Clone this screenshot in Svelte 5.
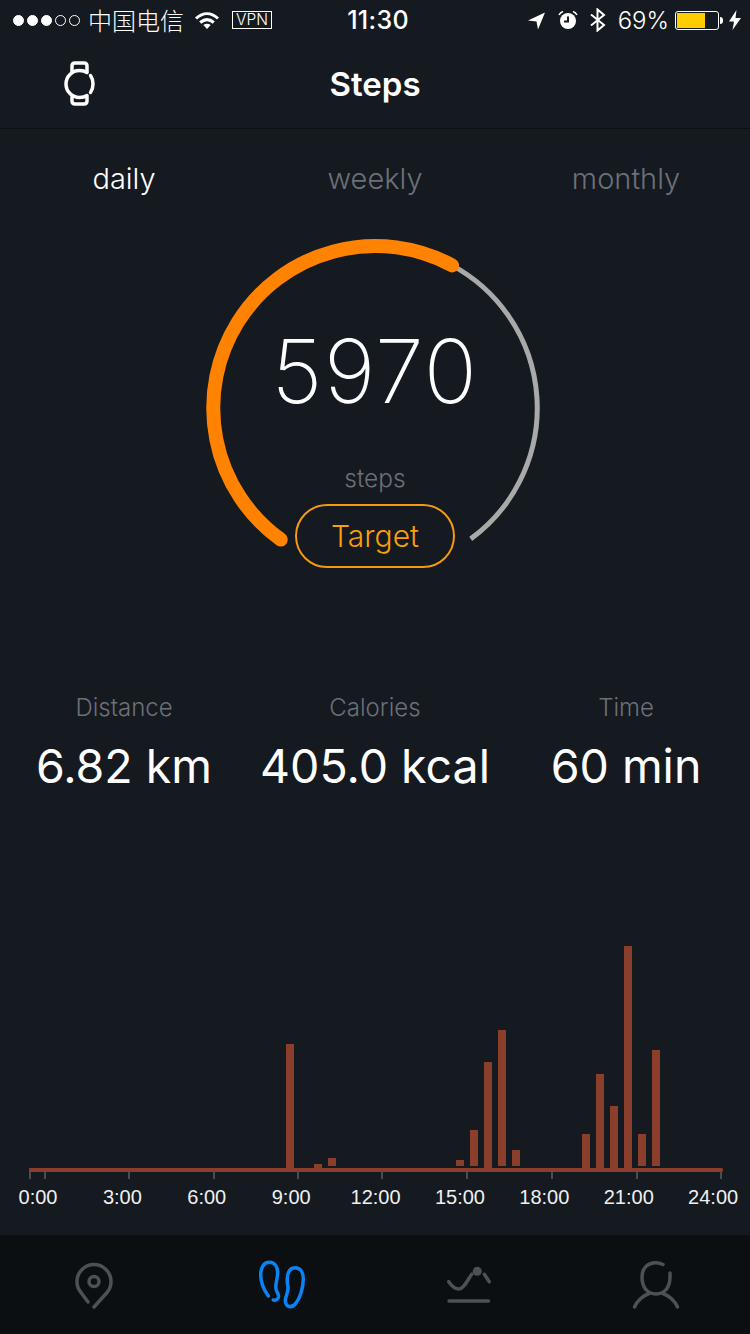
<script>
  const tabs = ["daily", "weekly", "monthly"];
  const stats = [
    { label: "Distance", value: "6.82 km" },
    { label: "Calories", value: "405.0 kcal" },
    { label: "Time", value: "60 min" },
  ];
  const hours = ["0:00", "3:00", "6:00", "9:00", "12:00", "15:00", "18:00", "21:00", "24:00"];
  const ticks = [30, 45, 129, 214, 298, 382, 467, 552, 637, 721];
  // x, top, bottom of each hourly bar, in page pixels
  const bars = [
    [286, 1044, 1170], [314, 1164, 1170], [328, 1158, 1166],
    [456, 1160, 1166], [470, 1130, 1166], [484, 1062, 1170],
    [498, 1030, 1166], [512, 1150, 1166], [582, 1134, 1170],
    [596, 1074, 1170], [610, 1106, 1170], [624, 946, 1170],
    [638, 1134, 1166], [652, 1050, 1166],
  ];

  // point on the gauge circle, degrees clockwise from the top
  const R = 162;
  const pt = (deg) => {
    const a = (deg * Math.PI) / 180;
    return `${375.25 + R * Math.sin(a)} ${408 - R * Math.cos(a)}`;
  };
  const arc = (from, to) => `M${pt(from)}A${R} ${R} 0 ${to - from > 180 ? 1 : 0} 1 ${pt(to)}`;
</script>

<div class="page">
  <div class="statusbar">
    <div class="status-left">
      <div class="signal">
        <i class="on"></i><i class="on"></i><i class="on"></i><i></i><i></i>
      </div>
      <span class="carrier">中国电信</span>
      <svg class="wifi" width="26" height="19" viewBox="0 0 26 19">
        <path d="M2 7.500C9 1 17 1 24 7.500" />
        <path d="M6.200 11.500C10.500 7.800 15.500 7.800 19.800 11.500" />
        <path class="solid" d="M9.300 14 13 18l3.700-4C14.500 12.200 11.500 12.200 9.300 14Z" />
      </svg>
      <span class="vpn">VPN</span>
    </div>
    <div class="clock">11:30</div>
    <div class="status-right">
      <svg width="19" height="19" viewBox="0 0 19 19">
        <path fill="#fff" d="M1 9.500 18 1.500 11 18.500 9.500 10.500Z" />
      </svg>
      <svg class="alarm" width="20" height="20" viewBox="0 0 20 20">
        <circle cx="10" cy="11" r="8" fill="#fff" />
        <path d="M10 6.500V11.500H6" fill="none" stroke="#151920" stroke-width="2" />
        <path d="M1 5C2 3 3.500 2 5 1.500M19 5C18 3 16.500 2 15 1.500" fill="none" stroke="#fff" stroke-width="1.500" />
      </svg>
      <svg class="bt" width="18" height="24" viewBox="0 0 18 24">
        <path d="M2 6.500 15 17 8.500 22.500V1.500L15 7 2 17.500" fill="none" stroke="#fff" stroke-width="2" />
      </svg>
      <span class="percent">69%</span>
      <div class="battery"><div class="level" style="width: 69%"></div></div>
      <div class="nub"></div>
      <svg class="bolt" width="12" height="20" viewBox="0 0 12 20">
        <path fill="#fff" d="M7.500 0 0 11.500H5L3.500 20 12 8H6.500Z" />
      </svg>
    </div>
  </div>

  <header class="navbar">
    <svg class="watch" width="40" height="54" viewBox="0 0 40 54">
      <path d="M13 15.500V10C13 8 14.200 7 16 7H25C26.800 7 28 8 28 10V15.500" />
      <path d="M13 41V45C13 47 14.200 48 16 48H25C26.800 48 28 47 28 45V41" />
      <path d="M28 16.500C25.800 15 23.300 14.500 20.500 14.500 13 14.500 7 20.500 7 28S13 41.500 20.500 41.500C23.300 41.500 25.800 41 28 39.500" />
      <path d="M31.500 19.500C33.300 22 34 25 34 28S33.300 34 31.500 36.500" />
    </svg>
    <h1>Steps</h1>
  </header>

  <nav class="tabs">
    {#each tabs as tab, i}
      <span class="tab" class:active={i === 0}>{tab}</span>
    {/each}
  </nav>

  <section class="gauge">
    <svg width="360" height="360" viewBox="195 229 360 360">
      <path d={arc(28.3, 143.9)} fill="none" stroke="#a9a9a9" stroke-width="5" />
      <path d={arc(215.7, 388.3)} fill="none" stroke="#ff8300" stroke-width="14" stroke-linecap="round" />
    </svg>
    <div class="gauge-text">
      <div class="count">5970</div>
      <div class="unit">steps</div>
      <button class="target">Target</button>
    </div>
  </section>

  <section class="stats">
    {#each stats as stat}
      <div class="stat">
        <div class="stat-label">{stat.label}</div>
        <div class="stat-value">{stat.value}</div>
      </div>
    {/each}
  </section>

  <section class="chart">
    <svg width="750" height="252" viewBox="0 930 750 252">
      {#each ticks as x}
        <rect x={x - 1} y="1168" width="2" height="11" fill="#4a4d4c" />
      {/each}
      <rect x="29" y="1168" width="694" height="4" rx="1.500" fill="#8b3e2c" />
      {#each bars as [x, top, bottom]}
        <rect {x} y={top} width="8" height={bottom - top} fill="#8b3e2c" />
      {/each}
    </svg>
    <div class="hours">
      {#each hours as hour}
        <span>{hour}</span>
      {/each}
    </div>
  </section>

  <footer class="tabbar">
    <svg class="grey" width="48" height="56" viewBox="0 0 48 56">
      <path d="M18 45 11 35.500A17 17 0 1 1 37 35.500L24 50" />
      <circle cx="24" cy="24.500" r="5" />
    </svg>
    <svg class="blue" width="54" height="54" viewBox="-1 0 54 54">
      <path d="M13.300 38C9 32 5.700 25 5.700 17 5.700 9 9 4.300 14.300 4.300 20 4.300 22.700 9 22.700 15 22.700 21 20 26 21 31 21.500 34 24 36 23.500 39 23 41.500 20 42.700 18.300 42" />
      <path d="M40 9.700C45 9.700 48.300 14 48.300 21 48.300 30 45 40 41 45 39 48 36.700 49 34 48.500 31 48 30 44 30.500 41 31 37 33.500 34 33 29 32.500 26 32 24 32.300 21 32.600 14 35 9.700 40 9.700Z" />
    </svg>
    <svg class="grey" width="48" height="44" viewBox="0 0 48 44">
      <path d="M3.700 18.700C6 22 10 26 14 26 19 26 23 16 27 11" />
      <circle class="dot" cx="32.300" cy="8.300" r="4.500" />
      <path d="M39.300 11.300 44.300 18.700" />
      <path d="M4 38H43.500" />
    </svg>
    <svg class="grey" width="48" height="52" viewBox="0 0 48 52">
      <path d="M31 5.500C28.500 4.300 26 3.800 24 3.800 15 3.800 10 10 10 18 10 28 15 35 24 35 33 35 38 28 38 18L38 14" />
      <path d="M2.500 48C5 42 11 36.500 17 34.500M31 34.500C37 36.500 43 42 45.500 48" />
    </svg>
  </footer>
</div>

<style>
  :global(body) {
    background: #151920;
  }

  .page {
    width: 750px;
    height: 1334px;
    display: flex;
    flex-direction: column;
    overflow: hidden;
    background: #151920;
    color: #fff;
    font-family: Inter, "Noto Sans CJK SC", sans-serif;
  }

  /* status bar */
  .statusbar {
    height: 40px;
    flex: none;
    display: grid;
    grid-template-columns: 1fr auto 1fr;
    align-items: center;
    padding: 0 9px 0 13px;
    font-size: 24px;
  }

  .status-left,
  .status-right {
    display: flex;
    align-items: center;
  }

  .status-right {
    justify-content: flex-end;
  }

  .signal {
    display: flex;
    gap: 3px;
  }

  .signal i {
    width: 11px;
    height: 11px;
    box-sizing: border-box;
    border: 1px solid #fff;
    border-radius: 50%;
  }

  .signal i.on {
    background: #fff;
  }

  .carrier {
    margin-left: 8px;
    font-family: "Noto Sans CJK SC", sans-serif;
    font-size: 24px;
    font-weight: 300;
    line-height: 40px;
  }

  .wifi {
    margin-left: 10px;
    fill: none;
    stroke: #fff;
    stroke-width: 3;
  }

  .wifi .solid {
    fill: #fff;
    stroke: none;
  }

  .vpn {
    margin-left: 12px;
    width: 40px;
    height: 18px;
    box-sizing: border-box;
    border: 1px solid #fff;
    font-size: 15.500px;
    font-weight: 300;
    line-height: 16px;
    text-align: center;
  }

  .clock {
    font-size: 25px;
    font-weight: 500;
    margin-left: 2px;
    letter-spacing: 0.300px;
  }

  .alarm {
    margin-left: 12px;
  }

  .bt {
    margin-left: 11px;
  }

  .percent {
    margin-left: 11px;
    font-weight: 300;
  }

  .battery {
    margin-left: 6px;
    width: 44px;
    height: 19px;
    box-sizing: border-box;
    padding: 1px;
    border: 1px solid #fff;
    border-radius: 3px;
  }

  .level {
    height: 100%;
    background: #ffcc00;
  }

  .nub {
    width: 3px;
    height: 7px;
    margin-left: 1px;
    background: #fff;
    border-radius: 0 3px 3px 0;
  }

  .bolt {
    margin-left: 6px;
  }

  /* nav bar */
  .navbar {
    height: 88px;
    flex: none;
    display: flex;
    align-items: center;
    justify-content: center;
    position: relative;
    border-bottom: 1px solid #0e1116;
  }

  .navbar h1 {
    margin: 0;
    font-size: 33px;
    font-weight: 600;
  }

  .watch {
    position: absolute;
    left: 59px;
    top: 16px;
    fill: none;
    stroke: #fff;
    stroke-width: 3.500;
    stroke-linecap: round;
  }

  /* tabs */
  .tabs,
  .stats {
    display: grid;
    grid-template-columns: repeat(3, 251px);
    justify-content: center;
    text-align: center;
  }

  .tabs {
    height: 100px;
    box-sizing: border-box;
    padding-bottom: 2px;
    flex: none;
    align-items: center;
    font-size: 29px;
    font-weight: 300;
  }

  .tab {
    color: #6c7077;
  }

  .tab.active {
    color: #fff;
  }

  /* gauge */
  .gauge {
    display: grid;
    width: 360px;
    height: 360px;
    flex: none;
    align-self: center;
  }

  .gauge svg,
  .gauge-text {
    grid-area: 1 / 1;
  }

  .gauge-text {
    display: flex;
    flex-direction: column;
    align-items: center;
  }

  .count {
    margin-top: 89px;
    font-size: 88px;
    font-weight: 200;
    line-height: 106px;
    letter-spacing: 1.500px;
  }

  .unit {
    margin-top: 37px;
    font-size: 24.500px;
    font-weight: 300;
    line-height: 34px;
    color: #6c7078;
  }

  .target {
    margin-top: 9px;
    width: 160px;
    height: 64px;
    padding: 0;
    border: 2px solid #f59a0e;
    border-radius: 32px;
    background: transparent;
    color: #f79f0c;
    font-family: inherit;
    font-size: 30px;
    font-weight: 300;
  }

  /* stats */
  .stats {
    margin-top: 100px;
    flex: none;
  }

  .stat-label {
    font-size: 24px;
    font-weight: 300;
    line-height: 38px;
    color: #6c7077;
  }

  .stat-value {
    margin-top: 11px;
    font-size: 46.500px;
    font-weight: 400;
    line-height: 56px;
  }

  /* chart */
  .chart {
    margin-top: auto;
    flex: none;
  }

  .chart svg {
    display: block;
  }

  .hours {
    display: grid;
    grid-template-columns: repeat(9, 84.400px);
    justify-items: center;
    margin-left: -4.200px;
    padding-top: 3px;
    height: 53px;
    box-sizing: border-box;
    font-family: "Liberation Sans", Arial, sans-serif;
    font-size: 20px;
    line-height: 24px;
    color: #f0f0f0;
  }

  /* tab bar */
  .tabbar {
    height: 99px;
    flex: none;
    display: grid;
    grid-template-columns: repeat(4, 187.500px);
    align-items: center;
    justify-items: center;
    background: #0b0f12;
  }

  .tabbar svg {
    fill: none;
    stroke-linecap: round;
  }

  .grey {
    stroke: #4e5154;
    stroke-width: 3.500;
  }

  .grey .dot {
    fill: #4e5154;
    stroke: none;
  }

  .blue {
    stroke: #0a84f5;
    stroke-width: 3.500;
  }
</style>
